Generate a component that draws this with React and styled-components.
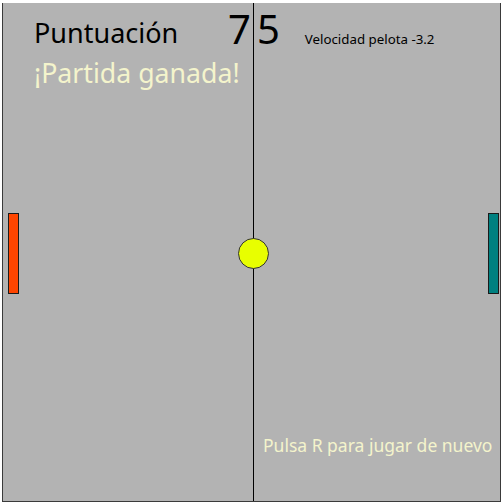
import React from "react";
import styled, { createGlobalStyle } from "styled-components";

const GlobalStyle = createGlobalStyle`
  html, body {
    margin: 0;
    padding: 0;
    background: #ffffff;
    overflow: hidden;
  }
  body {
    font-family: "Noto Sans", "Open Sans", sans-serif;
  }
`;

const Court = styled.div`
  position: relative;
  margin: 3px 0 0 2px;
  width: 497px;
  height: 498px;
  background: #b3b3b3;
  border: 1px solid #3a3a3a;
  border-top: none;
  overflow: hidden;
`;

const Net = styled.div`
  position: absolute;
  z-index: 1;
  left: 250px;
  top: 0;
  bottom: 0;
  width: 1px;
  background: #000;
`;

const Header = styled.div`
  position: relative;
  display: flex;
  align-items: flex-start;
  padding: 0 0 0 31px;
`;

const ScoreBlock = styled.div`
  display: flex;
  flex-direction: column;
  width: 195px;
`;

const Label = styled.div`
  font-size: ${(p) => p.size || 27}px;
  line-height: 34px;
  color: ${(p) => p.color || "#000"};
  white-space: nowrap;
  margin-top: ${(p) => p.top || 0}px;
`;

const Digits = styled.div`
  display: flex;
  gap: 6px;
  font-size: 40px;
  line-height: 52px;
  color: #000;
  margin-left: -1px;
`;

const Speed = styled.div`
  font-size: 13.3px;
  line-height: 18px;
  margin: 27px 0 0 25px;
  white-space: nowrap;
`;

const Paddle = styled.div`
  position: absolute;
  top: 210px;
  left: ${(p) => p.x}px;
  width: 9px;
  height: 79px;
  background: ${(p) => p.color};
  border: 1px solid #1a1a1a;
`;

const Ball = styled.div`
  position: absolute;
  z-index: 2;
  left: 235px;
  top: 235px;
  width: 29px;
  height: 29px;
  border-radius: 50%;
  background: #e8ff00;
  border: 1px solid #333;
`;

const Footer = styled.div`
  position: absolute;
  left: 260px;
  top: 430px;
  font-size: 17.5px;
  line-height: 24px;
  color: #f4f4cc;
  white-space: nowrap;
`;

export default function App() {
  return (
    <>
      <GlobalStyle />
      <Court>
        <Header>
          <ScoreBlock>
            <Label top={13}>Puntuación</Label>
            <Label color="#f4f4cc" size={26.7} top={6}>¡Partida ganada!</Label>
          </ScoreBlock>
          <Digits>
            <span>7</span>
            <span>5</span>
          </Digits>
          <Speed>Velocidad pelota -3.2</Speed>
        </Header>
        <Net />
        <Paddle x={5} color="#ff4500" />
        <Paddle x={485} color="#008080" />
        <Ball />
        <Footer>Pulsa R para jugar de nuevo</Footer>
      </Court>
    </>
  );
}
